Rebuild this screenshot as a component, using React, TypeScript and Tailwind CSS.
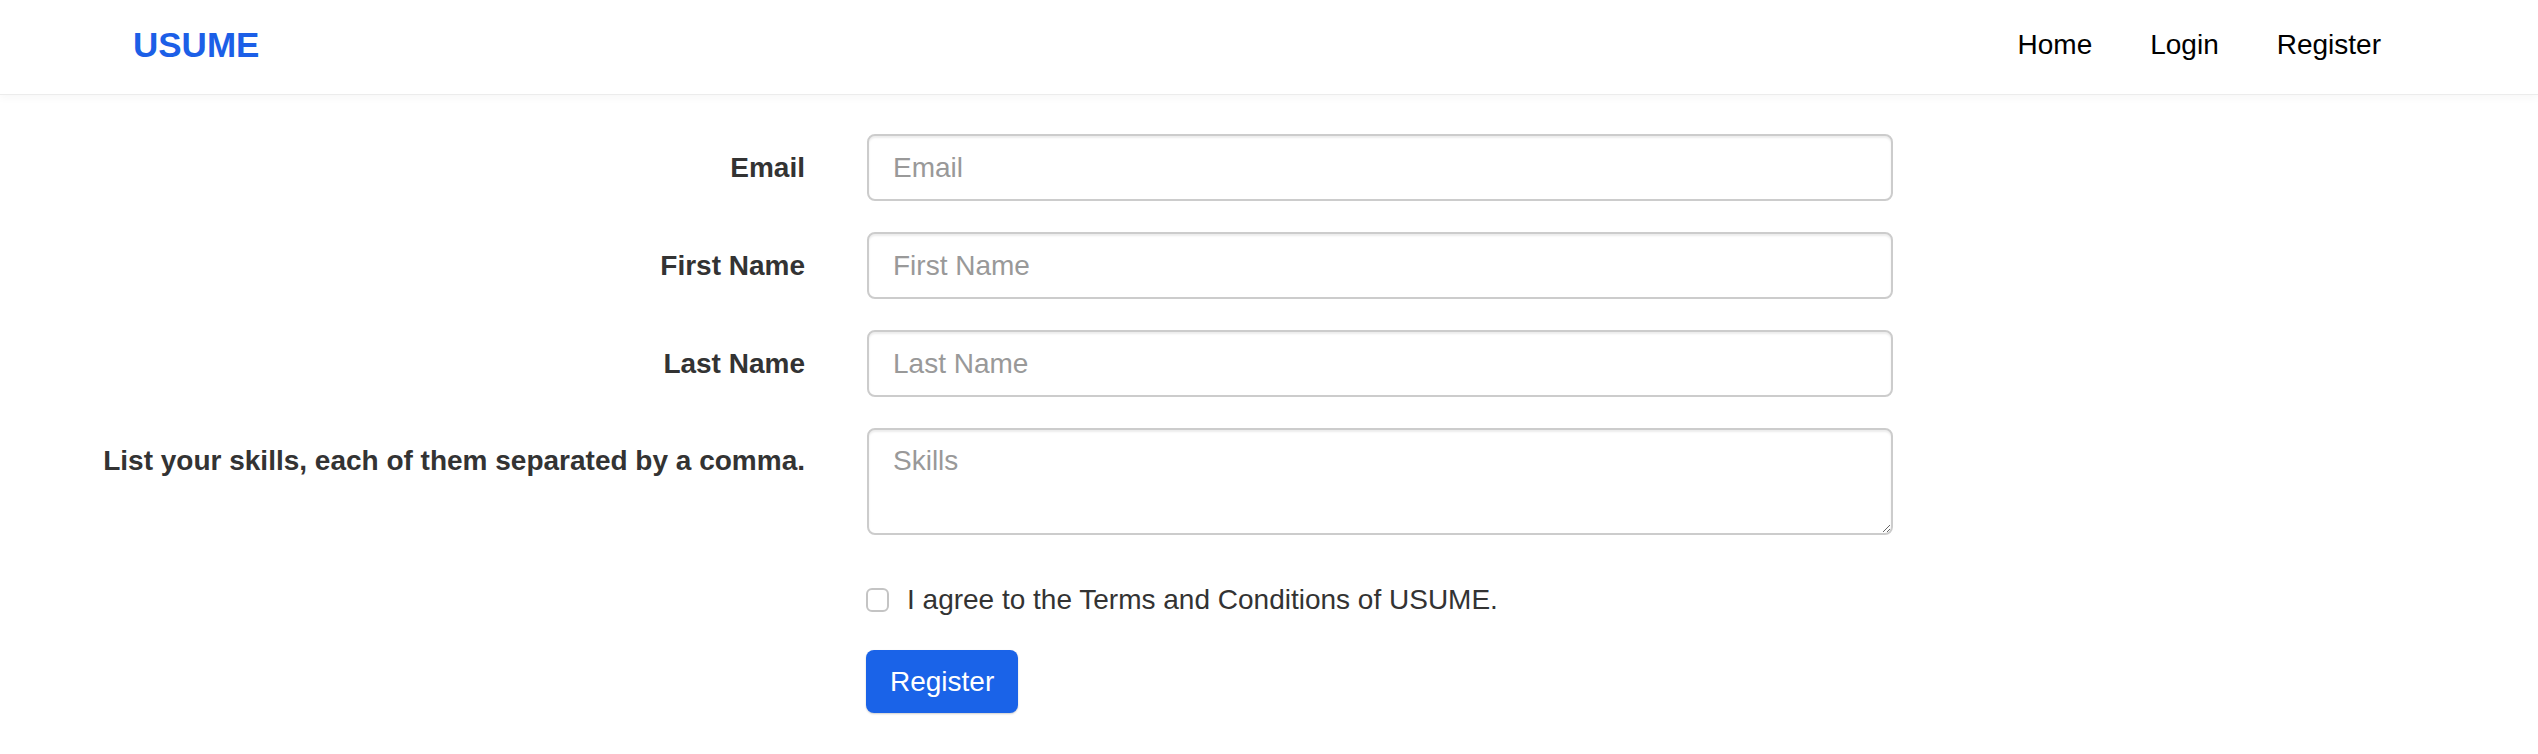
import type { ReactNode } from 'react'

const font = { fontFamily: '"Liberation Sans", Arial, Helvetica, sans-serif' }

function FormRow({ label, children, top = false }: { label: string; children: ReactNode; top?: boolean }) {
  return (
    <div className={`mb-[31px] flex ${top ? 'items-start' : 'items-center'}`}>
      <label
        className={`w-[805px] shrink-0 text-right text-[28px] leading-[40px] font-bold text-[#333] ${top ? 'pt-[13px]' : ''}`}
      >
        {label}
      </label>
      <div className="ml-[62px] w-[1026px]">{children}</div>
    </div>
  )
}

const inputClass =
  'block w-full rounded-[8px] border-2 border-[#cccccc] bg-white px-[24px] text-[28px] text-[#555] placeholder:text-[#999] shadow-[inset_0_2px_2px_rgba(0,0,0,0.075)] outline-none'

export default function App() {
  return (
    <div className="min-h-[754px] bg-white" style={font}>
      <header className="flex h-[95px] items-center justify-between border-b border-[#ececec] bg-white pb-[4px] pl-[133px] pr-[157px] shadow-[0_3px_8px_rgba(0,0,0,0.035)]">
        <a className="text-[35px] leading-[40px] font-bold text-[#1c5fe7]">USUME</a>
        <nav className="flex items-center gap-[58px] text-[28px] leading-[40px] text-black">
          <a>Home</a>
          <a>Login</a>
          <a>Register</a>
        </nav>
      </header>

      <form className="pt-[39px]">
        <FormRow label="Email">
          <input type="email" placeholder="Email" className={`${inputClass} h-[67px]`} />
        </FormRow>
        <FormRow label="First Name">
          <input type="text" placeholder="First Name" className={`${inputClass} h-[67px]`} />
        </FormRow>
        <FormRow label="Last Name">
          <input type="text" placeholder="Last Name" className={`${inputClass} h-[67px]`} />
        </FormRow>
        <FormRow label="List your skills, each of them separated by a comma." top>
          <textarea
            placeholder="Skills"
            className={`${inputClass} h-[107px] resize-y py-[11px] leading-[40px]`}
          />
        </FormRow>

        <div className="ml-[866px] pt-[14px]">
          <label className="flex items-center text-[28px] leading-[40px] text-[#333]">
            <span className="h-[24px] w-[23px] shrink-0 rounded-[6px] border-2 border-[#c4c4c4] bg-white" />
            <span className="ml-[18px]">I agree to the Terms and Conditions of USUME.</span>
          </label>
          <button
            type="button"
            className="mt-[30px] h-[63px] rounded-[8px] bg-[#1a63e8] px-[24px] text-[28px] leading-[40px] text-white shadow-[0_1px_2px_rgba(0,0,0,0.2)]"
          >
            Register
          </button>
        </div>
      </form>
    </div>
  )
}
